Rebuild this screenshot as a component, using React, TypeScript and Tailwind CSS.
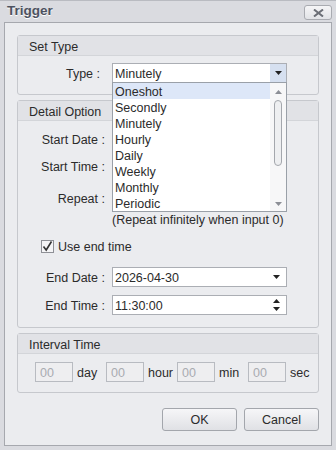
import React from "react"

const items = ["Oneshot", "Secondly", "Minutely", "Hourly", "Daily", "Weekly", "Monthly", "Periodic"]

function Arrow({ up = false }: { up?: boolean }) {
  return (
    <svg width="7" height="4" viewBox="0 0 7 4" className="block">
      {up ? <path d="M0 4 L3.5 0 L7 4 Z" fill="#222" /> : <path d="M0 0 L7 0 L3.5 4 Z" fill="#222" />}
    </svg>
  )
}

function Group({ title, children }: { title: string; children: React.ReactNode }) {
  return (
    <div className="border border-[#c6c8cd] rounded-[3px] bg-[#ebecef]">
      <div className="h-[20px] border-b border-[#d3d5d9] bg-[#e1e2e6] pl-[11px] pt-[3px] flex items-center leading-none">
        {title}
      </div>
      {children}
    </div>
  )
}

function Row({ label, children }: { label: string; children: React.ReactNode }) {
  return (
    <div className="flex items-center h-[20px]">
      <div className="w-[88px] text-right pr-[1px] pt-[2px] whitespace-pre">{label}</div>
      <div className="ml-[6px]">{children}</div>
    </div>
  )
}

function Box({ children }: { children?: React.ReactNode }) {
  return (
    <div className="w-[175px] h-[20px] border border-[#abaeb4] bg-white flex items-center pl-[2px] pr-[6px]">
      {children}
    </div>
  )
}

export default function App() {
  return (
    <div className="w-[336px] h-[450px] bg-[#dadbe0] border-t border-[#b9bbc1] flex flex-col font-['Liberation_Sans',Arial,sans-serif] text-[12.5px] text-[#2b2b2b]">
      <div className="h-[21px] flex items-center justify-between pl-[7px] pr-[4px]">
        <span className="text-[13.5px] font-bold text-[#4d5260] [text-shadow:0_1px_0_#fff]">Trigger</span>
        <button
          type="button"
          className="w-[28px] h-[15px] mt-[2px] rounded-[3px] border border-[#a9abb1] bg-gradient-to-b from-[#f5f5f7] to-[#e2e3e7] flex items-center justify-center"
        >
          <svg width="11" height="8" viewBox="0 0 11 8">
            <path d="M1 0.5 L10 7.5 M10 0.5 L1 7.5" stroke="#6b6e76" strokeWidth="2" />
          </svg>
        </button>
      </div>

      <div className="mx-[4px] mb-[4px] flex-1 border border-[#a6a8ae] bg-[#ebecef] px-[12px] pt-[12px] flex flex-col gap-[5px]">
        <Group title="Set Type">
          <div className="h-[38px] pt-[7px]">
            <div className="flex items-center h-[20px]">
              <div className="w-[88px] text-right pr-[6px] pt-[2px] whitespace-pre">Type :</div>
              <div className="ml-[6px] relative">
                <div className="w-[175px] h-[20px] border border-[#abaeb4] bg-white flex items-center pl-[2px]">
                  <span className="flex-1 pt-[2px]">Minutely</span>
                  <div className="w-[16px] h-[18px] bg-[#d6e0f0] flex items-center justify-center">
                    <Arrow />
                  </div>
                </div>
                <div className="absolute z-10 left-0 top-[19px] w-[175px] h-[130px] border border-[#9aa0a8] bg-white flex">
                  <div className="flex-1 flex flex-col">
                    {items.map((it, i) => (
                      <div
                        key={it}
                        className={
                          "h-[16px] leading-[16px] pt-[1px] pl-[2px] " + (i === 0 ? "bg-[#dde7f8]" : "")
                        }
                      >
                        {it}
                      </div>
                    ))}
                  </div>
                  <div className="w-[16px] bg-[#f7f7f8] flex flex-col items-center">
                    <div className="h-[17px] flex items-center justify-center">
                      <svg width="7" height="4" viewBox="0 0 7 4">
                        <path d="M0 4 L3.5 0 L7 4 Z" fill="#8c8f96" />
                      </svg>
                    </div>
                    <div className="w-[8px] h-[66px] rounded-[4px] border border-[#a4a7ad] bg-[#eeeff1]" />
                    <div className="flex-1" />
                    <div className="h-[14px] flex items-center justify-center">
                      <svg width="7" height="4" viewBox="0 0 7 4">
                        <path d="M0 0 L7 0 L3.5 4 Z" fill="#8c8f96" />
                      </svg>
                    </div>
                  </div>
                </div>
              </div>
            </div>
          </div>
        </Group>

        <Group title="Detail Option">
          <div className="flex flex-col pt-[8px] pb-[12px]">
            <Row label="Start Date :">
              <Box />
            </Row>
            <div className="mt-[7px]">
              <Row label="Start Time :">
                <Box />
              </Row>
            </div>
            <div className="mt-[15px] flex items-start h-[20px]">
              <div className="w-[88px] text-right pr-[1px] -mt-[1px]">Repeat :</div>
              <div className="ml-[6px]">
                <Box />
              </div>
            </div>
            <div className="h-[15px] leading-[15px] pt-[2px] pl-[94px] whitespace-nowrap">(Repeat infinitely when input 0)</div>
            <div className="mt-[14px] h-[13px] flex items-center pl-[23px]">
              <div className="w-[13px] h-[13px] border border-[#8e9096] bg-[#f4f4f6] flex items-center justify-center">
                <svg width="11" height="11" viewBox="0 0 11 11">
                  <path d="M1.5 5.5 L4.2 9 L9.5 0.5" stroke="#333" strokeWidth="1.6" fill="none" />
                </svg>
              </div>
              <span className="ml-[4px] pt-[2px]">Use end time</span>
            </div>
            <div className="mt-[14px]">
              <Row label="End Date :">
                <Box>
                  <span className="flex-1 pt-[2px]">2026-04-30</span>
                  <Arrow />
                </Box>
              </Row>
            </div>
            <div className="mt-[8px]">
              <Row label="End Time :">
                <Box>
                  <span className="flex-1 pt-[2px]">11:30:00</span>
                  <div className="flex flex-col gap-[4px]">
                    <Arrow up />
                    <Arrow />
                  </div>
                </Box>
              </Row>
            </div>
          </div>
        </Group>

        <Group title="Interval Time">
          <div className="h-[38px] pt-[8px] pl-[17px] grid grid-cols-[71px_71px_71px_71px]">
            {["day", "hour", "min", "sec"].map((u) => (
              <div key={u} className="flex items-center h-[20px]">
                <div className="w-[38px] h-[20px] border border-[#b8bbc1] bg-[#eeeef0] text-[#a9abb0] pl-[4px] pt-[2px] flex items-center">
                  00
                </div>
                <span className="ml-[4px] pt-[2px]">{u}</span>
              </div>
            ))}
          </div>
        </Group>

        <div className="flex justify-end gap-[7px] mt-[10px]">
          <button
            type="button"
            className="w-[75px] h-[23px] pt-[1px] rounded-[3px] border border-[#a3a6ac] bg-gradient-to-b from-[#f6f6f8] to-[#e0e1e5] text-[12.5px] text-[#2b2b2b]"
          >
            OK
          </button>
          <button
            type="button"
            className="w-[75px] h-[23px] pt-[1px] rounded-[3px] border border-[#a3a6ac] bg-gradient-to-b from-[#f6f6f8] to-[#e0e1e5] text-[12.5px] text-[#2b2b2b]"
          >
            Cancel
          </button>
        </div>
      </div>
    </div>
  )
}
